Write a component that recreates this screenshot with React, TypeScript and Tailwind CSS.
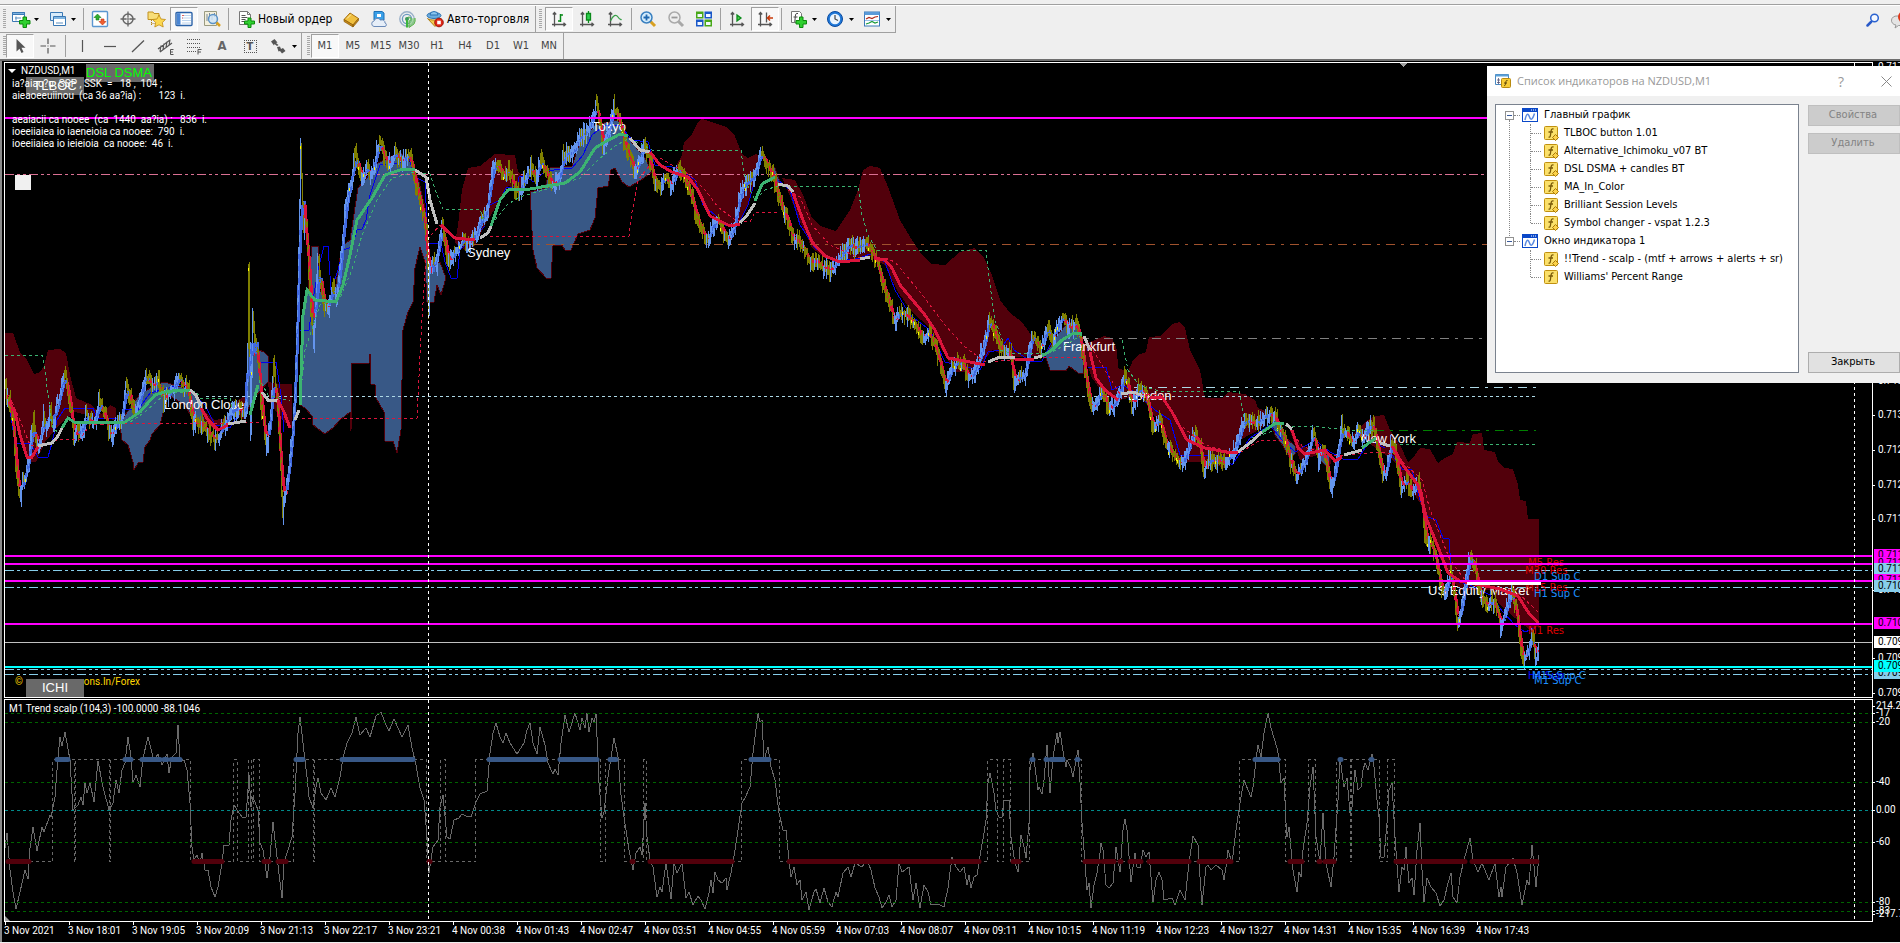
import type { ReactNode } from "react";
import clsx from "clsx";

type Point = [number, number];

const parse = (s: string): Point[] => s.trim().split(/\s+/).map((p) => p.split(",").map(Number) as Point);
const toPath = (pts: Point[]) => pts.map(([x, y], i) => `${i ? "L" : "M"}${x} ${y}`).join("");

/* ---------- chart data ---------- */

const PRICE = parse(`5,388 7,398 10,405 13,430 15,465 18,490 20,498 22,475 25,480 28,462 30,435 33,422 36,450 40,440 43,415 46,430
50,410 53,425 56,405 60,395 63,378 65,375 68,398 71,410 73,440 77,428 81,435 85,415 90,420 95,425 98,400 104,415 108,430 112,438
116,420 121,420 126,380 130,400 135,410 140,400 144,380 148,377 152,388 158,382 163,400 170,392 174,390 178,374 182,385 188,390
192,425 196,420 200,425 206,430 214,440 220,432 226,420 234,408 240,410 246,412 248,270 250,430 252,315 255,345 258,365 260,400
263,425 266,450 270,415 273,365 276,400 280,460 282,515 284,495 288,470 291,440 294,400 297,300 300,150 303,230 306,225 310,310
313,345 317,255 322,300 328,312 332,285 336,300 340,260 345,205 350,185 355,152 360,180 366,168 372,175 376,150 380,142 385,160
390,165 394,152 398,160 404,160 409,154 414,180 420,205 426,230 428,310 429,275 432,265 436,265 439,235 442,224 445,250 448,263
452,255 458,245 464,240 470,242 475,235 480,218 486,215 490,180 494,162 498,165 503,180 508,170 514,188 518,193 524,180 530,167
536,180 541,157 546,175 553,185 558,180 564,152 570,155 576,145 582,135 588,127 594,117 596,100 600,130 602,152 606,140 610,120
613,107 617,115 621,130 625,145 630,158 634,173 638,165 644,145 650,165 655,187 660,185 665,177 670,190 675,172 682,172 686,185
691,195 695,215 700,225 705,238 708,240 712,225 718,220 724,235 728,243 733,230 738,200 743,185 748,182 754,175 760,154 766,165
772,175 778,195 783,210 789,225 794,238 800,240 806,255 812,263 818,260 824,268 830,273 836,262 842,255 848,245 854,248 860,245
866,242 870,250 876,260 882,285 888,300 894,323 898,315 904,313 910,320 916,330 922,338 930,335 936,350 942,373 945,390 950,370
956,362 962,365 968,378 975,370 980,355 984,342 988,322 992,325 998,345 1004,350 1010,355 1014,385 1018,375 1024,378 1030,342
1034,337 1040,350 1047,327 1052,340 1058,325 1062,317 1068,330 1076,322 1080,340 1085,378 1090,407 1095,408 1101,390 1106,405
1112,408 1118,395 1125,372 1131,408 1138,390 1145,395 1152,428 1160,420 1166,448 1172,450 1178,463 1185,458 1192,432 1200,445
1203,472 1208,460 1216,460 1224,463 1232,455 1238,440 1242,425 1246,420 1252,425 1260,420 1266,415 1271,413 1278,425 1284,440
1290,462 1296,476 1302,468 1308,450 1313,427 1318,468 1322,445 1328,475 1331,487 1336,460 1341,427 1348,435 1352,448 1358,430
1362,440 1368,426 1373,426 1378,450 1382,478 1386,470 1391,442 1396,460 1400,488 1406,480 1412,493 1418,480 1421,500 1424,540
1430,542 1436,560 1440,588 1444,598 1450,572 1453,590 1457,627 1462,600 1467,568 1470,555 1475,570 1480,598 1487,605 1495,600
1500,632 1505,610 1511,592 1516,610 1520,652 1523,664 1528,650 1532,632 1535,665 1538,645`);

const RED = "#dc143c";
const GREEN = "#3cb371";
const SILVER = "#c0c0c0";

const SLOW_MA: [string, string][] = [
  [RED, "9,402 15,412 20,435 27,457 32,457 38,447"],
  [SILVER, "38,446 52,443 58,436 62,428"],
  [GREEN, "62,428 68,418 74,422 125,422 140,412 155,395 165,392 180,390 190,390"],
  [SILVER, "190,390 196,395 201,406"],
  [RED, "201,408 208,420 218,430 228,425"],
  [SILVER, "228,424 246,421"],
  [GREEN, "250,415 258,385"],
  [SILVER, "262,392 268,400 278,400"],
  [RED, "278,400 284,412 290,428"],
  [SILVER, "295,420 299,410"],
  [GREEN, "300,405 303,315 307,290 315,300 336,302 343,285 350,255 357,220 372,198 385,175 400,170 415,169"],
  [SILVER, "415,170 426,177 430,200 437,224"],
  [RED, "441,225 447,231 455,238 475,240"],
  [SILVER, "480,238 488,233 491,226"],
  [GREEN, "491,226 500,200 508,190 530,189 565,183 580,172 595,148 605,142 620,134 628,136"],
  [SILVER, "630,138 640,150 650,152"],
  [RED, "650,152 660,165 672,172 688,177 698,190 710,216 730,226 740,224"],
  [SILVER, "740,223 748,214 755,203"],
  [GREEN, "755,201 762,184 775,177"],
  [SILVER, "778,184 788,186 793,192"],
  [RED, "793,193 803,220 812,242 825,256 840,262 860,260"],
  [SILVER, "860,259 870,257"],
  [RED, "874,258 885,260 892,268 900,285 925,315 935,330 948,358 970,362 985,365"],
  [SILVER, "988,362 1000,357 1015,357"],
  [RED, "1015,359 1034,359"],
  [SILVER, "1034,358 1042,356"],
  [GREEN, "1042,356 1052,350 1062,340 1072,334 1082,333"],
  [SILVER, "1084,336 1090,350"],
  [RED, "1090,352 1096,378 1105,390 1118,400"],
  [SILVER, "1121,394 1134,392 1142,396"],
  [RED, "1150,398 1162,397 1172,412 1187,440 1205,448 1232,453 1238,452"],
  [SILVER, "1238,452 1250,443 1262,432"],
  [GREEN, "1262,432 1276,423 1284,424"],
  [SILVER, "1286,424 1292,429"],
  [RED, "1292,430 1298,448 1305,454 1325,450 1335,461 1342,457"],
  [SILVER, "1344,455 1362,450"],
  [GREEN, "1362,448 1376,438"],
  [SILVER, "1380,443 1390,446"],
  [RED, "1392,446 1403,465 1418,485 1427,520 1440,552 1448,573 1460,581 1500,589 1518,596 1528,612 1538,623"],
];

const MAROON_CLOUDS = [
  "5,333 13,333 20,352 27,360 34,374 40,372 44,366 48,350 60,349 66,353 70,375 76,398 90,404 102,414 110,405 116,408 116,420 98,418 75,412 60,424 45,442 36,462 30,462 20,430 15,410 5,398",
  "200,408 215,420 226,418 236,402 248,393 246,420 232,414 224,424 215,429 206,425",
  "268,382 280,384 292,384 292,428 280,418 270,402",
  "455,243 458,225 462,190 468,168 480,166 495,154 515,155 518,172 524,176 522,190 508,186 495,208 485,225 475,246 465,250",
  "675,168 682,155 684,142 692,134 698,122 702,119 718,124 726,127 734,134 742,154 748,158 756,154 762,158 756,176 750,200 740,222 730,226 716,220 705,205 695,188 684,178",
  "782,178 795,180 803,195 812,218 820,226 836,231 850,210 858,190 863,170 870,166 880,168 888,187 900,220 912,240 922,255 932,264 945,265 960,252 975,248 984,258 992,275 1000,300 1010,313 1022,322 1032,336 1040,344 1042,356 1010,357 992,350 975,372 955,372 945,355 930,328 912,312 898,292 885,265 870,257 840,262 825,258 812,248 800,222 790,196",
  "1080,345 1095,340 1104,336 1112,338 1117,350 1118,368 1128,372 1133,360 1140,354 1146,352 1149,337 1160,336 1172,324 1180,322 1185,328 1190,350 1200,370 1205,398 1222,398 1228,392 1245,394 1255,400 1258,408 1268,412 1262,428 1240,440 1225,468 1205,462 1182,462 1172,445 1160,424 1140,395 1120,400 1105,396 1092,378",
  "1290,430 1302,446 1322,450 1332,458 1330,466 1318,455 1300,460",
  "1352,435 1365,422 1375,416 1384,415 1390,430 1400,445 1408,462 1415,455 1420,448 1430,449 1435,458 1438,463 1445,458 1453,454 1457,442 1470,443 1473,434 1482,433 1484,450 1495,452 1498,461 1504,468 1513,469 1518,485 1520,500 1526,501 1528,519 1539,519 1539,626 1530,630 1515,618 1500,605 1490,590 1460,590 1445,570 1435,545 1420,503 1405,480 1395,462 1365,440",
];

const BLUE_CLOUDS = [
  "120,425 122,440 128,445 133,462 134,470 138,463 143,462 145,447 150,440 152,434 160,425 165,405 168,395 185,405 192,418 200,430 206,425 200,402 190,390 165,382 157,384 140,394 125,415",
  "247,345 264,352 268,356 268,382 256,396 247,410",
  "300,405 305,408 312,416 313,425 325,434 333,428 340,420 350,412 351,431 352,363 369,363 370,354 371,384 375,385 376,398 384,412 385,441 393,441 397,453 401,430 403,330 408,312 413,302 415,268 420,247 425,262 427,302 434,302 437,285 441,295 446,278 440,262 430,266 426,212 418,178 410,162 400,152 378,163 365,180 358,188 350,240 342,246 335,290 328,304 320,290 318,246 312,246 308,290 303,310",
  "530,192 545,188 550,168 572,166 580,142 595,125 618,120 630,140 645,158 652,172 641,180 629,187 622,182 615,168 611,170 608,186 598,188 595,218 590,230 578,234 571,250 565,250 562,245 553,246 551,278 546,278 537,268 533,250 531,210",
  "771,166 775,168 780,182 776,186",
  "1045,355 1050,370 1066,371 1069,366 1078,373 1084,373 1081,334 1078,322 1068,322 1055,338",
  "1270,417 1278,418 1284,436 1295,446 1295,454 1290,459 1283,446 1275,435",
  "1318,450 1330,456 1328,468 1320,460",
];

const GREEN_DASHED = [
  "5,355 42,355 45,370 48,395 53,430 60,432",
  "130,422 145,412 165,394 196,391 200,398 230,398 232,410",
  "254,400 260,380 268,395 290,401",
  "300,400 305,350 320,305 340,298 352,270 362,235 378,198 392,178 415,172 430,174 437,195 443,209 480,209 484,222",
  "495,220 508,204 520,197 560,185 580,178 598,160 615,146 630,138 652,150 741,150 745,180 755,200 765,190 778,186",
  "782,186 858,186 862,215 868,235 877,250 986,250 990,285 995,320 1003,342",
  "1000,350 1010,353 1040,354 1052,352 1065,345 1082,335",
  "1122,340 1128,370 1140,386 1160,391 1239,391 1244,420",
  "1252,438 1285,427 1312,426 1345,430 1376,430",
];

const RED_DASHED = [
  "12,402 22,425 30,445 38,447 60,439 80,439 90,425 125,423 240,423 262,422",
  "302,418 417,418 421,335 427,240 440,225",
  "490,236 629,236 632,212 638,180 650,165",
  "660,158 690,175 705,190 718,207 735,220 750,222 755,212 780,212",
  "788,190 800,197 812,225 830,245 860,258",
  "885,258 895,262 920,292 945,325 965,347 985,362 1050,357 1082,357",
  "1090,345 1108,375 1120,394 1160,394 1180,425 1205,445 1238,454 1260,440 1284,440",
  "1290,430 1303,447 1335,456 1380,452 1400,455",
  "1403,462 1422,480 1430,510 1450,560 1465,580 1490,588 1515,590 1538,612",
];

const BLUE_THIN = [
  "10,410 15,443 30,443 38,457 48,457 52,443 57,420 65,408 93,408 97,418 118,419 126,409 138,410 150,393 180,385 190,390 205,405 215,425 230,428 240,412",
  "258,362 276,362 281,395 284,432",
  "300,330 309,330 313,300 318,270 324,246 328,246 331,290 338,270 343,250 352,247 357,230 362,229 366,220 370,195 380,165 400,163 408,155 415,177 425,182 428,243 441,243 445,262 451,278 457,278 460,250 485,226",
  "490,205 500,200 506,188 518,186 519,177 524,176 534,182 545,171 572,168 583,155 592,135 605,125 620,125 632,140 648,142 655,165 680,168 695,180 703,205 715,215 725,225 738,225 748,205 755,180",
  "778,180 790,190 800,225 815,248 835,262 860,258 870,254 885,262 895,290 910,315 930,330 945,362 980,370 988,352 1000,350 1008,338 1014,350 1030,361 1042,361 1055,335",
  "1088,367 1106,367 1112,390 1122,385 1135,392 1155,410 1170,420 1180,455 1220,455 1232,465 1250,438 1270,425 1282,440 1295,452 1315,440 1330,452 1343,459 1358,459 1370,440 1385,448",
  "1390,452 1402,469 1412,470 1420,500 1428,517 1436,520 1443,538 1449,539 1452,580 1470,585 1490,595 1503,612 1515,625 1525,632 1535,628",
];

const OSCILLATOR = parse(`5,848 7,833 10,870 13,892 16,909 20,892 25,870 28,879 30,848 33,827 37,851 42,827 44,832 50,815 51,817 55,797 58,757
60,737 62,746 65,732 70,760 73,810 78,805 81,797 83,805 85,783 87,793 90,783 94,802 98,761 103,787 109,810 113,803 116,780 119,793
122,770 125,763 128,737 131,757 133,783 136,775 140,787 143,758 148,737 152,753 154,760 158,754 162,765 167,754 169,773 172,757
176,753 178,725 180,762 184,760 187,770 190,803 192,847 194,860 197,855 200,863 202,853 205,870 208,870 211,887 215,897 218,887
222,863 224,845 229,845 231,820 234,805 239,813 243,818 246,817 249,775 251,807 253,797 258,810 260,843 263,850 267,878 270,857
273,822 277,857 282,898 284,863 288,850 292,837 295,793 298,733 300,717 303,743 307,777 309,797 313,808 316,787 318,778 321,793
326,800 331,788 335,797 340,777 343,758 347,743 352,733 356,717 360,735 366,728 370,737 376,716 381,712 386,725 389,731 394,719
398,728 402,737 408,725 412,748 416,765 420,788 424,800 427,837 429,873 433,847 438,840 440,807 443,795 447,837 450,839 454,820
459,818 462,814 466,816 471,817 476,802 480,794 487,791 490,753 493,733 496,723 500,737 503,743 506,733 510,743 517,754 524,743
527,730 530,723 533,743 537,754 540,727 545,745 548,763 553,774 555,769 558,775 561,743 565,715 569,732 575,713 580,730 582,718
585,728 587,713 589,732 592,718 594,722 596,714 597,737 599,783 602,818 604,812 608,777 611,757 614,738 618,757 621,795 624,817
629,850 633,870 636,853 640,847 642,855 645,803 647,837 650,860 653,867 657,897 660,887 662,892 666,863 671,899 674,863 677,873
682,863 686,898 689,892 693,905 698,896 701,900 705,909 709,893 711,880 713,893 715,872 718,880 722,883 726,878 727,890 731,873
735,850 738,830 742,803 745,798 750,787 753,753 758,713 760,722 762,720 764,760 768,747 771,767 775,780 779,813 783,830 786,830
789,860 791,877 794,867 797,885 800,880 802,900 806,892 809,910 814,892 816,889 820,903 824,888 828,902 832,907 836,892 838,897
843,873 848,867 851,877 855,863 862,867 867,860 871,870 875,888 879,897 882,908 886,902 889,895 892,907 896,900 899,863 902,872
909,867 913,900 916,883 920,908 924,885 928,892 931,905 938,904 944,907 948,888 952,857 956,867 960,872 964,867 967,885 969,875
971,888 974,877 977,875 981,850 984,833 986,820 988,783 990,773 994,793 996,810 999,817 1002,817 1004,800 1009,800 1011,837
1015,863 1018,872 1021,835 1024,847 1026,858 1029,823 1030,770 1033,753 1035,767 1038,790 1039,787 1042,794 1044,780 1047,745
1050,793 1053,757 1057,733 1058,743 1060,732 1064,757 1066,767 1067,760 1071,768 1073,777 1076,760 1078,750 1080,783 1082,823
1085,863 1087,890 1089,883 1091,908 1094,885 1097,873 1100,853 1101,843 1103,850 1106,885 1109,888 1113,883 1116,847 1120,872
1123,830 1125,819 1127,830 1131,882 1135,853 1137,867 1140,868 1143,850 1146,857 1149,852 1153,902 1156,880 1159,872 1162,880
1164,900 1172,898 1175,905 1180,890 1185,900 1189,863 1193,836 1198,845 1200,877 1202,905 1206,867 1208,865 1211,870 1216,865
1222,870 1224,880 1226,867 1228,850 1232,863 1236,830 1240,803 1244,780 1248,790 1251,797 1253,787 1256,760 1258,745 1261,757
1264,733 1268,713 1271,728 1277,748 1278,753 1281,783 1284,778 1286,823 1287,837 1289,827 1293,870 1297,892 1299,872 1301,877
1303,850 1307,823 1310,787 1313,767 1316,837 1320,862 1323,813 1326,863 1331,887 1334,857 1338,800 1340,758 1344,787 1347,778
1350,813 1352,807 1355,770 1358,790 1361,787 1363,770 1365,763 1368,770 1372,754 1374,767 1377,800 1379,817 1381,857 1384,857
1387,823 1389,790 1392,783 1395,837 1399,892 1402,867 1404,870 1406,847 1409,883 1412,878 1414,895 1417,850 1420,823 1422,870
1424,902 1427,878 1431,887 1436,893 1440,906 1444,900 1448,883 1451,873 1453,897 1457,903 1460,877 1464,860 1470,838 1473,860
1478,872 1482,863 1489,880 1495,863 1499,897 1501,887 1502,897 1506,867 1513,858 1517,873 1522,905 1527,880 1529,885 1532,845
1536,887 1539,855`);

const UPPER = 759;
const LOWER = 861;
const UPPER_BARS = "57,68 125,131 142,160 164,167 171,180 296,303 342,413 489,545 560,597 610,616 751,769 1032,1033 1046,1047 1051,1063 1077,1078 1255,1278 1340,1341 1371,1372";
const LOWER_BARS = "8,29 194,222 264,269 278,286 429,430 632,633 650,732 789,951 954,979 1013,1019 1085,1099 1103,1114 1120,1121 1130,1141 1149,1189 1199,1231 1290,1302 1319,1320 1325,1334 1396,1416 1420,1465 1472,1537";
/* x positions where the trend state flips between the lower and upper band */
const FLIPS = [52, 74, 75, 109, 110, 190, 233, 237, 248, 251, 253, 259, 293, 313, 314, 426, 440, 445, 475, 600, 605, 624, 643, 646, 741, 779, 987, 997, 1003, 1010, 1029, 1081, 1239, 1285, 1308, 1315, 1336, 1350, 1351, 1379, 1387, 1394];

const TIMES = ["3 Nov 2021", "3 Nov 18:01", "3 Nov 19:05", "3 Nov 20:09", "3 Nov 21:13", "3 Nov 22:17", "3 Nov 23:21", "4 Nov 00:38", "4 Nov 01:43", "4 Nov 02:47", "4 Nov 03:51", "4 Nov 04:55", "4 Nov 05:59", "4 Nov 07:03", "4 Nov 08:07", "4 Nov 09:11", "4 Nov 10:15", "4 Nov 11:19", "4 Nov 12:23", "4 Nov 13:27", "4 Nov 14:31", "4 Nov 15:35", "4 Nov 16:39", "4 Nov 17:43"];

function random(seed: number) {
  let s = seed;
  return () => {
    s = (s * 1664525 + 1013904223) % 4294967296;
    return s / 4294967296;
  };
}

function buildCandles() {
  const rnd = random(7);
  const close: number[] = [];
  const start = PRICE[0][0];
  const end = PRICE[PRICE.length - 1][0];
  let k = 0;
  for (let x = start; x <= end; x++) {
    while (k < PRICE.length - 2 && PRICE[k + 1][0] < x) k++;
    const [x0, y0] = PRICE[k];
    const [x1, y1] = PRICE[k + 1];
    close.push(y0 + ((y1 - y0) * (x - x0)) / (x1 - x0) + (rnd() - 0.5) * 9);
  }
  let up = "";
  let down = "";
  let dots = "";
  close.forEach((c, i) => {
    const prev = close[Math.max(0, i - 1)];
    const ahead = close[Math.min(close.length - 1, i + 2)];
    const x = start + i + 0.5;
    const hi = Math.round(Math.min(c, prev) - 1 - rnd() * 8);
    const lo = Math.round(Math.max(c, prev) + 1 + rnd() * 8);
    const seg = `M${x} ${hi}V${lo}`;
    if (ahead + (rnd() - 0.5) * 6 < prev) up += seg;
    else down += seg;
    if (rnd() > 0.96) dots += `M${x} ${Math.round(c)}v3`;
  });
  const avg = close.map((_, i) => {
    const w = close.slice(Math.max(0, i - 5), i + 2);
    return w.reduce((a, b) => a + b, 0) / w.length;
  });
  let rise = "";
  let fall = "";
  for (let i = 3; i < avg.length; i++) {
    const seg = `M${start + i - 1} ${avg[i - 1].toFixed(1)}L${start + i} ${avg[i].toFixed(1)}`;
    if (avg[i] < avg[i - 3]) rise += seg;
    else fall += seg;
  }
  return { up, down, dots, rise, fall };
}

const candles = buildCandles();

function trendPath() {
  let y = LOWER;
  let d = `M5 ${y}`;
  for (const x of FLIPS) {
    d += `H${x}`;
    y = y === LOWER ? UPPER : LOWER;
    d += `V${y}`;
  }
  return d + "H1539";
}

/* ---------- toolbar ---------- */

const AXES = <path d="M4.500 2.500v14M2 14.500h13.500M2.800 4.500l1.700-2 1.700 2M13.500 12.800l2 1.700-2 1.700" />;

const ICONS: Record<string, ReactNode> = {
  newChart: (
    <>
      <path d="M1.500 2.500h12v9h-12z" fill="#fff" stroke="#3a78b4" />
      <path d="M1.500 2.500h12v2h-12z" fill="#7fb4e0" stroke="#3a78b4" />
      <path d="M4 8h6M5 6.500v4" stroke="#5a8fc0" />
      <path d="M12 7h3.500v3.500H19V14h-3.500v3.500H12V14H8.500v-3.500H12z" fill="#2fd02f" stroke="#0c8a0c" />
    </>
  ),
  profiles: (
    <>
      <path d="M2.500 2.500h12v8h-12z" fill="#d8ebfa" stroke="#3a78b4" />
      <path d="M5.500 6.500h12v9h-12z" fill="#fff" stroke="#3a78b4" />
      <path d="M6 8h11" stroke="#7fb4e0" strokeWidth="2" />
      <path d="M8 13h7" stroke="#5a8fc0" />
    </>
  ),
  marketWatch: (
    <>
      <rect x="1.500" y="1.500" width="15" height="15" rx="1" fill="#fff" stroke="#5a96d0" strokeWidth="1.400" />
      <path d="M6.500 4l3.500 3.500H8V10H5V7.500H3z" fill="#2fae2f" stroke="#167a16" strokeWidth=".6" />
      <path d="M11.500 15L8 11.500h2V9h3v2.500h2z" fill="#f06030" stroke="#c03010" strokeWidth=".6" />
    </>
  ),
  target: (
    <g fill="none" stroke="#666">
      <circle cx="9" cy="9" r="5" strokeWidth="1.500" />
      <circle cx="9" cy="9" r="1.200" />
      <path d="M9 1.500V7M9 11v5.500M1.500 9H7M11 9h5.500" strokeWidth="1.300" />
    </g>
  ),
  folderStar: (
    <>
      <path d="M1 2h5l1 1.500h5v6H1z" fill="#f8de78" stroke="#c09020" />
      <path d="M4.500 10v6M4.500 13.500h4" stroke="#b08010" strokeDasharray="1 1" />
      <path d="M12 5l2 4 4.500.500-3.200 3 .9 4.500-4.200-2.200L7.800 17l.9-4.500-3.200-3L10 9z" fill="#fcd850" stroke="#c08a10" strokeWidth=".8" />
    </>
  ),
  navigator: (
    <>
      <rect x="1" y="2.500" width="16" height="13" rx="1" fill="#fff" stroke="#2a62a8" strokeWidth="1.400" />
      <path d="M2 3.200h3.500v11.600H2z" fill="#4a86d4" />
      <path d="M7 5.500h9M7 8h9M7 10.500h9M7 13h9" stroke="#bcd4ee" />
      <path d="M7 5.500h2M7 8h1" stroke="#e06060" />
    </>
  ),
  tester: (
    <>
      <path d="M1.500 1.500h12v14h-12z" fill="#f4f0dc" stroke="#9a9a80" />
      <path d="M4 4v7M6.500 3v6M9 5v5M11.500 3v4" stroke="#7a8a9a" />
      <circle cx="10" cy="9" r="4.500" fill="#cfe6fa" fillOpacity=".8" stroke="#5a92c8" strokeWidth="1.400" />
      <path d="M13.500 12.500L17 16" stroke="#d8a020" strokeWidth="2.500" />
    </>
  ),
  newOrder: (
    <>
      <path d="M2.500 1.500h8l3 3v10h-11z" fill="#fff" stroke="#777" />
      <path d="M10.500 1.500v3h3" fill="none" stroke="#777" />
      <path d="M4.500 5.500h4M4.500 7.500h6M4.500 9.500h4M4.500 11.500h3" stroke="#555" />
      <path d="M11 8h3v3h3.500v3H14v3.500h-3V14H7.500v-3H11z" fill="#2fd02f" stroke="#0c8a0c" />
    </>
  ),
  book: (
    <>
      <path d="M2 9.500L8 3l8.500 5.500L11 15z" fill="#f0c040" stroke="#a87010" />
      <path d="M2 9.500v2L11 17v-2zM11 15l5.500-6.500v2L11 17z" fill="#c88a18" stroke="#8a5c08" strokeWidth=".7" />
      <path d="M5 8.500L9 4.500" stroke="#fff0b0" />
    </>
  ),
  cloudBox: (
    <>
      <path d="M4 1.500h8l2 1.500v7H4z" fill="#3aa0e8" stroke="#1a70b8" />
      <path d="M7 4h4v3H7z" fill="#fff" />
      <path d="M4 16.500a2.800 2.800 0 010-5.500 3.500 3.500 0 016.500-.8A3 3 0 0115 13a1.800 1.800 0 010 3.500z" fill="#e6eef8" stroke="#6a8ab8" />
    </>
  ),
  signal: (
    <g fill="none">
      <circle cx="9" cy="9" r="7.200" stroke="#9ab0c8" strokeWidth="1.400" />
      <circle cx="9" cy="9" r="4.600" stroke="#6a9ac0" strokeWidth="1.300" />
      <path d="M9 9a2 2 0 112 2v6.500l5-3.500A8 8 0 0017 8" fill="#7ccf6a" fillOpacity=".6" stroke="#5ab04a" />
      <circle cx="9" cy="9" r="2" fill="#3a9a5a" />
      <path d="M9 10v7.500" stroke="#3cb43c" strokeWidth="2" />
    </g>
  ),
  autoTrade: (
    <>
      <ellipse cx="8" cy="5.500" rx="7" ry="3" fill="#6aaee0" stroke="#2a70b0" />
      <path d="M4 5a4 3.500 0 018 0z" fill="#8ac6f0" stroke="#2a70b0" />
      <path d="M1.500 8.500C4 10.500 12 10.500 15 8.500L9 16.500z" fill="#f4cc50" stroke="#b08018" />
      <circle cx="13" cy="12.500" r="4.300" fill="#e02818" stroke="#a01408" />
      <path d="M11.200 10.700h3.600v3.600h-3.600z" fill="#fff" />
    </>
  ),
  bars: (
    <g fill="none" stroke="#555" strokeWidth="1.300">
      {AXES}
      <path d="M10.500 4v8M10.500 5h2.500M8 11h2.500" stroke="#0a8a1a" strokeWidth="1.500" />
    </g>
  ),
  candlesIcon: (
    <g fill="none" stroke="#555" strokeWidth="1.300">
      {AXES}
      <path d="M10.500 1v12" stroke="#0a8a1a" />
      <path d="M8.500 3.500h4v6.500h-4z" fill="#2fd04f" stroke="#0a8a1a" />
    </g>
  ),
  lineIcon: (
    <g fill="none" stroke="#555" strokeWidth="1.300">
      {AXES}
      <path d="M4.500 11C7 5 10 4 12 7s2.500 2 3.500 3" stroke="#3aa04a" />
    </g>
  ),
  zoomIn: (
    <>
      <path d="M11.500 11.500L16 16" stroke="#d8a020" strokeWidth="3" />
      <circle cx="7.500" cy="7.500" r="5.500" fill="#d4ecfc" stroke="#3a80c0" strokeWidth="1.500" />
      <path d="M4.500 7.500h6M7.500 4.500v6" stroke="#2068b0" strokeWidth="1.800" />
    </>
  ),
  zoomOut: (
    <>
      <path d="M11.500 11.500L16 16" stroke="#a8a8a8" strokeWidth="3" />
      <circle cx="7.500" cy="7.500" r="5.500" fill="#eee" stroke="#aaa" strokeWidth="1.500" />
      <path d="M4.500 7.500h6" stroke="#999" strokeWidth="1.800" />
    </>
  ),
  tiles: (
    <>
      <path d="M1 1.500h7.500v7H1zM9.500 9.500H17v7H9.500z" fill="#48a818" />
      <path d="M9.500 1.500H17v7H9.500zM1 9.500h7.500v7H1z" fill="#1a58c8" />
      <path d="M2.500 4h4.500v3H2.500zM11 4h4.500v3H11zM2.500 12H7v3H2.500zM11 12h4.500v3H11z" fill="#f4f8ff" />
    </>
  ),
  scroll: (
    <g fill="none" stroke="#555" strokeWidth="1.300">
      {AXES}
      <path d="M9 5l4 3-4 3z" fill="#4fd04f" stroke="#0a8a1a" />
    </g>
  ),
  shift: (
    <g fill="none" stroke="#555" strokeWidth="1.300">
      {AXES}
      <path d="M10.500 2.500v10" />
      <path d="M17 8h-5M14 5.500L11.500 8 14 10.500" stroke="#c83808" strokeWidth="1.500" />
    </g>
  ),
  indicators: (
    <>
      <path d="M2.500 1.500h8l2 2v9h-10z" fill="#fff" stroke="#777" />
      <path d="M9 3.500c-2-.5-2.500.5-2.700 3L5.800 12M4.500 7h4" fill="none" stroke="#444" />
      <path d="M10.500 7h3.500v3.500h3.500V14H14v3.500h-3.500V14H7v-3.500h3.500z" fill="#2fd02f" stroke="#0c8a0c" />
    </>
  ),
  clock: (
    <>
      <circle cx="9" cy="9" r="7.500" fill="#1f78d8" stroke="#0a4aa0" />
      <circle cx="9" cy="9" r="5.200" fill="#eaf4fe" />
      <path d="M9 5v4l3 1.500" fill="none" stroke="#444" strokeWidth="1.200" />
    </>
  ),
  template: (
    <>
      <rect x="1.500" y="2" width="15" height="14" fill="#fff" stroke="#3a78b8" />
      <path d="M1.500 2h15v3h-15z" fill="#5a9ad8" />
      <path d="M3 9l3-1.500 3 1 3-1.500 3-.5" fill="none" stroke="#b02818" strokeWidth="1.200" />
      <path d="M3 14l3-1 3-1.500 3 1.500 3-1" fill="none" stroke="#1a9a3a" strokeWidth="1.200" />
      <path d="M2 10.500h14" stroke="#9ac0e8" />
    </>
  ),
  pointer: <path d="M5.500 2v12.500l3-2.800 2 4.300 2-1-2-4.200h4z" fill="#555" />,
  cross: <path d="M9 1.500V7M9 11v5.500M1.500 9H7M11 9h5.500M8.500 9h1" stroke="#555" strokeWidth="1.200" />,
  vline: <path d="M9.500 3v12" stroke="#555" strokeWidth="1.200" />,
  hline: <path d="M3 9.500h12" stroke="#555" strokeWidth="1.200" />,
  trend: <path d="M3 15L15 3.500" stroke="#555" strokeWidth="1.300" />,
  equid: (
    <>
      <path d="M1 12L13 3M3 15L15 6M4 8.500l-1 6M7 6.500l-1 6M10 4.500l-1 6M13 2.500l-1 6" stroke="#555" strokeWidth="1.200" />
      <path d="M16.500 12.500h-3v5h3M13.500 15h2.500" fill="none" stroke="#555" />
    </>
  ),
  fibo: (
    <>
      <path d="M2 2.500h14M2 6.500h14M2 10.500h14M2 14.500h9" stroke="#555" strokeDasharray="1 1" />
      <path d="M16.500 12.500h-3.500v5M13 15h3" fill="none" stroke="#555" />
    </>
  ),
  arrows: (
    <path d="M2 4.500L5.500 2l3 3.500-1.500.5 2.500 2-1.500 1-2.500-2-.5 1.500zM8 10l3-.5 1 2.500 2-1 2.500 3-3.500 2.500-2-2.500-1.500.5z" fill="#555" />
  ),
};

const PRESSED = "border border-t-[#a0a0a0] border-l-[#a0a0a0] border-r-white border-b-white bg-[#f8f8f8]";

function Icon({ name }: { name: string }) {
  return (
    <svg viewBox="0 0 18 18" className="size-[18px] shrink-0 overflow-visible" aria-hidden="true">
      {ICONS[name]}
    </svg>
  );
}

const Grip = () => <span className="h-5 w-[3px] shrink-0 bg-[repeating-linear-gradient(#a8a8a8_0_1px,#efefef_1px_2px)]" />;
const Separator = () => <span className="mx-[2px] h-[22px] w-px shrink-0 bg-[#a0a0a0]" />;

function ToolButton({ label, pressed, children }: { label: string; pressed?: boolean; children: ReactNode }) {
  return (
    <button aria-label={label} aria-pressed={pressed} className={clsx("flex h-6 w-7 shrink-0 items-center justify-center", pressed && PRESSED)}>
      {children}
    </button>
  );
}

function Caret({ label }: { label: string }) {
  return (
    <button aria-label={label} className="flex h-6 w-[9px] shrink-0 items-center">
      <svg viewBox="0 0 5 3" className="h-[3px] w-[5px]">
        <path d="M0 0h5L2.500 3z" />
      </svg>
    </button>
  );
}

const PERIODS = ["M1", "M5", "M15", "M30", "H1", "H4", "D1", "W1", "MN"];

function Toolbars() {
  return (
    <header className="bg-[#efefef] text-black">
      <div className="h-[5px] border-b border-[#a0a0a0]" />
      <div className="flex h-7 items-center border-t border-white">
        <div className="flex h-[27px] items-center border-r border-b border-[#a0a0a0] pl-[3px]">
          <Grip />
          <ToolButton label="Новый график"><Icon name="newChart" /></ToolButton>
          <Caret label="Новый график: список" />
          <ToolButton label="Профили"><Icon name="profiles" /></ToolButton>
          <Caret label="Профили: список" />
          <span className="w-px" />
          <Separator />
          <ToolButton label="Обзор рынка"><Icon name="marketWatch" /></ToolButton>
          <ToolButton label="Окно данных"><Icon name="target" /></ToolButton>
          <ToolButton label="Избранное"><Icon name="folderStar" /></ToolButton>
          <ToolButton label="Навигатор" pressed><Icon name="navigator" /></ToolButton>
          <ToolButton label="Тестер"><Icon name="tester" /></ToolButton>
          <Separator />
          <button className="flex h-6 w-[106px] shrink-0 items-center gap-[3px] pl-[6px] text-[12px] leading-4 whitespace-nowrap">
            <Icon name="newOrder" />
            Новый ордер
          </button>
          <ToolButton label="MetaEditor"><Icon name="book" /></ToolButton>
          <ToolButton label="VPS"><Icon name="cloudBox" /></ToolButton>
          <ToolButton label="Сигналы"><Icon name="signal" /></ToolButton>
          <button className="flex h-6 w-[114px] shrink-0 items-center gap-[3px] pl-[5px] text-[12px] leading-4 whitespace-nowrap">
            <Icon name="autoTrade" />
            Авто-торговля
          </button>
        </div>
        <div className="flex h-[27px] items-center border-r border-b border-[#a0a0a0] pl-[3px]">
          <Grip />
          <span className="w-[3px]" />
          <ToolButton label="Бары" pressed><Icon name="bars" /></ToolButton>
          <ToolButton label="Свечи"><Icon name="candlesIcon" /></ToolButton>
          <ToolButton label="Линия"><Icon name="lineIcon" /></ToolButton>
          <Separator />
          <ToolButton label="Увеличить"><Icon name="zoomIn" /></ToolButton>
          <ToolButton label="Уменьшить"><Icon name="zoomOut" /></ToolButton>
          <ToolButton label="Расположить окна"><Icon name="tiles" /></ToolButton>
          <Separator />
          <ToolButton label="Автопрокрутка"><Icon name="scroll" /></ToolButton>
          <ToolButton label="Сдвиг графика" pressed><Icon name="shift" /></ToolButton>
          <Separator />
          <ToolButton label="Индикаторы"><Icon name="indicators" /></ToolButton>
          <Caret label="Индикаторы: список" />
          <ToolButton label="Периоды"><Icon name="clock" /></ToolButton>
          <Caret label="Периоды: список" />
          <ToolButton label="Шаблоны"><Icon name="template" /></ToolButton>
          <Caret label="Шаблоны: список" />
        </div>
        <div className="ml-auto flex shrink-0 items-center gap-[11px] overflow-hidden">
          <button aria-label="Поиск">
            <svg viewBox="0 0 14 14" className="size-[14px]">
              <path d="M1.500 12.500L5 9" stroke="#2a5ac8" strokeWidth="2.500" strokeLinecap="round" />
              <circle cx="8.500" cy="5" r="3.800" fill="#f4f8ff" stroke="#2a62d0" strokeWidth="1.500" />
            </svg>
          </button>
          <button aria-label="Сообщения" className="w-[9px] overflow-hidden">
            <svg viewBox="0 0 18 18" className="size-[18px] max-w-none">
              <path d="M6 5a5 4.500 0 00-1 9l-1 3 3.500-2.500H12V5z" fill="#e4e4e4" stroke="#999" />
              <circle cx="13" cy="6" r="6" fill="#e03818" />
            </svg>
          </button>
        </div>
      </div>
      <div className="flex h-[26px] items-center">
        <div className="flex h-full items-center border-r border-[#a0a0a0] pl-[3px]">
          <Grip />
          <ToolButton label="Курсор" pressed><Icon name="pointer" /></ToolButton>
          <ToolButton label="Перекрестие"><Icon name="cross" /></ToolButton>
          <span className="w-px" />
          <Separator />
          <ToolButton label="Вертикальная линия"><Icon name="vline" /></ToolButton>
          <ToolButton label="Горизонтальная линия"><Icon name="hline" /></ToolButton>
          <ToolButton label="Трендовая линия"><Icon name="trend" /></ToolButton>
          <ToolButton label="Канал"><Icon name="equid" /></ToolButton>
          <ToolButton label="Фибоначчи"><Icon name="fibo" /></ToolButton>
          <button className="h-6 w-7 shrink-0 text-[13px] font-bold text-[#666]">A</button>
          <button className="flex h-6 w-7 shrink-0 items-center justify-center">
            <span className="flex size-[13px] items-center justify-center border border-dotted border-[#555] text-[11px] leading-none font-bold text-[#555]">T</span>
          </button>
          <ToolButton label="Стрелки"><Icon name="arrows" /></ToolButton>
          <Caret label="Стрелки: список" />
        </div>
        <div className="flex h-full items-center border-r border-[#a0a0a0] pl-[5px]">
          <Grip />
          <span className="w-px" />
          {PERIODS.map((p) => (
            <button key={p} className={clsx("flex h-6 w-7 shrink-0 items-center justify-center text-[11px] text-[#444]", p === "M1" && PRESSED)}>
              {p}
            </button>
          ))}
        </div>
      </div>
      <div className="h-[2px] bg-[#6e6e6e]" />
    </header>
  );
}

/* ---------- charts ---------- */

type Level = { y: number; color: string; width?: number; dash?: string; from?: number; to?: number };

const DOT = "3 3";
const DASH_DOT = "9 6 3 6";
const DASH_DOT_DOT = "9 3 3 3 3 3";

const BACK_LEVELS: Level[] = [
  { y: 174.5, color: "#db7093", dash: DASH_DOT_DOT },
  { y: 244.5, color: "#a0522d", dash: DASH_DOT, from: 474 },
  { y: 338.5, color: "#808080", dash: DASH_DOT, from: 1080 },
  { y: 387.5, color: "#add8e6", dash: DASH_DOT, from: 1134, to: 1536 },
  { y: 396.5, color: "#add8e6", dash: DOT, from: 206, to: 1536 },
  { y: 430.5, color: "#008000", dash: DASH_DOT, from: 1375, to: 1536 },
  { y: 444.5, color: "#3cb371", dash: DOT, from: 1394, to: 1536 },
  { y: 570.5, color: "#87ceeb", dash: DASH_DOT_DOT },
  { y: 587.5, color: "#87ceeb", dash: DASH_DOT_DOT },
  { y: 669.5, color: "#87ceeb", dash: DASH_DOT_DOT },
  { y: 674.5, color: "#87ceeb", dash: DASH_DOT_DOT },
  { y: 642.5, color: "#c0c0c0" },
];

const FRONT_LEVELS: Level[] = [
  { y: 118, color: "#ff00ff", width: 2 },
  { y: 556, color: "#ff00ff", width: 2 },
  { y: 564, color: "#ff00ff", width: 2 },
  { y: 581, color: "#ff00ff", width: 2 },
  { y: 624, color: "#ff00ff", width: 2 },
  { y: 667, color: "#00ffff", width: 2 },
];

const Levels = ({ items }: { items: Level[] }) => (
  <>
    {items.map((l) => (
      <line key={l.y} x1={l.from ?? 5} x2={l.to ?? "101%"} y1={l.y} y2={l.y} stroke={l.color} strokeWidth={l.width ?? 1} strokeDasharray={l.dash} />
    ))}
  </>
);

const SESSIONS: [number, number, string][] = [
  [164, 409, "London Close"],
  [467, 257, "Sydney"],
  [592, 131, "Tokyo"],
  [1063, 351, "Frankfurt"],
  [1128, 400, "London"],
  [1361, 443, "New York"],
  [1428, 595, "US Equity Market"],
];

const TAGS: [number, number, string, string][] = [
  [1528, 566, "#dd0000", "M5 Res"],
  [1525, 574, "#dd0000", "M30 Res"],
  [1534, 580, "#1e90ff", "D1 Sup C"],
  [1525, 591, "#dd0000", "M15 Res"],
  [1534, 597, "#1e90ff", "H1 Sup C"],
  [1528, 634, "#dd0000", "M1 Res"],
  [1528, 679, "#0000ff", "H4 Sup"],
  [1532, 679, "#1e90ff", "M15 Sup C"],
  [1534, 684, "#1e90ff", "M1 Sup C"],
];

function PriceChart() {
  return (
    <svg className="block h-[634px] w-full" role="img" aria-label="NZDUSD,M1">
      <g transform="translate(-5 -63)" fill="none" shapeRendering="crispEdges">
        {MAROON_CLOUDS.map((c) => <polygon key={c} points={c} fill="#52000b" />)}
        {BLUE_CLOUDS.map((c) => <polygon key={c} points={c} fill="#385886" stroke="#52000b" />)}
        <Levels items={BACK_LEVELS} />
        {BLUE_THIN.map((l) => <polyline key={l} points={l} stroke="#0000ee" />)}
        <path d={candles.down} stroke="#808000" />
        <path d={candles.up} stroke="#6495ed" />
        <path d={candles.rise} stroke="#4169e1" strokeWidth="3" />
        <path d={candles.fall} stroke={RED} strokeWidth="3" />
        <g fill="#fff" fontSize="13" fontFamily="Liberation Sans, sans-serif">
          {SESSIONS.map(([x, y, t]) => <text key={t} x={x} y={y}>{t}</text>)}
        </g>
        <path d={candles.up} stroke="#6495ed" strokeDasharray="7 5" />
        <path d={candles.down} stroke="#808000" strokeDasharray="6 7" />
        <path d={candles.dots} stroke="#ffff00" />
        {GREEN_DASHED.map((l) => <polyline key={l} points={l} stroke={GREEN} strokeDasharray={DOT} />)}
        {RED_DASHED.map((l) => <polyline key={l} points={l} stroke={RED} strokeDasharray={DOT} />)}
        {SLOW_MA.map(([color, l]) => <polyline key={l} points={l} stroke={color} strokeWidth="3" />)}
        <g fontSize="10" fontFamily="DejaVu Sans, sans-serif">
          {TAGS.map(([x, y, color, t]) => <text key={t} x={x} y={y} fill={color}>{t}</text>)}
        </g>
        <Levels items={FRONT_LEVELS} />
        <path d="M1467 583h74" stroke="#fff" strokeWidth="3" />
        <path d="M428.500 63V697M1854.500 63V697" stroke="#fff" strokeDasharray={DOT} />
        <path d="M1399 63h9l-4.500 4z" fill="#a0a0a0" />
      </g>
    </svg>
  );
}

const OSC_LEVELS: Level[] = [
  { y: 713.5, color: "#006400", dash: DOT },
  { y: 722.5, color: "#006400", dash: DOT },
  { y: 782.5, color: "#006400", dash: DOT },
  { y: 810.5, color: "#008b8b", dash: DOT },
  { y: 842.5, color: "#006400", dash: DOT },
  { y: 902.5, color: "#006400", dash: DOT },
  { y: 911.5, color: "#006400", dash: DOT },
];

function Oscillator() {
  return (
    <svg className="block h-[221px] w-full" role="img" aria-label="Trend scalp">
      <g transform="translate(-5 -700)" fill="none">
        <g shapeRendering="crispEdges">
          <path d={toPath(OSCILLATOR)} stroke="#696969" />
          <Levels items={OSC_LEVELS} />
          <path d={trendPath()} transform="translate(.5 .5)" stroke="#696969" strokeDasharray={DOT} />
        </g>
        <g strokeWidth="5" strokeLinecap="round">
          {parse(UPPER_BARS).map(([a, b]) => <path key={a} d={`M${a} ${UPPER + 0.5}H${b}`} stroke="#385886" />)}
          {parse(LOWER_BARS).map(([a, b]) => <path key={a} d={`M${a} ${LOWER + 0.5}H${b}`} stroke="#52000b" />)}
        </g>
        <path d="M428.500 700V921M1854.500 700V921" stroke="#fff" strokeDasharray={DOT} shapeRendering="crispEdges" />
        <path d="M5 921v-5l5 5z" fill="#a0a0a0" />
      </g>
    </svg>
  );
}

type AxisLabel = { y: number; text: string; badge?: string };

const PRICE_LABELS: AxisLabel[] = [
  { y: 67, text: "0.71755" },
  { y: 381, text: "0.71350" },
  { y: 415, text: "0.71310" },
  { y: 450, text: "0.71265" },
  { y: 485, text: "0.71225" },
  { y: 519, text: "0.71180" },
  { y: 590, text: "0.71090" },
  { y: 658, text: "0.70950" },
  { y: 693, text: "0.70910" },
  { y: 555, text: "0.71135", badge: "bg-[#ff00ff] text-black" },
  { y: 563, text: "0.71125", badge: "bg-[#ff00ff] text-black" },
  { y: 569, text: "0.71115", badge: "bg-[#87ceeb] text-black" },
  { y: 580, text: "0.71100", badge: "bg-[#ff00ff] text-black" },
  { y: 586, text: "0.71095", badge: "bg-[#87ceeb] text-black" },
  { y: 623, text: "0.71050", badge: "bg-[#ff00ff] text-black" },
  { y: 642, text: "0.70995", badge: "bg-white text-black" },
  { y: 673, text: "0.70955", badge: "bg-[#87ceeb] text-black" },
  { y: 666, text: "0.70965", badge: "bg-[#00ffff] text-black" },
];

const OSC_LABELS: AxisLabel[] = [
  { y: 706, text: "214.27" },
  { y: 713, text: "-17" },
  { y: 722, text: "-20" },
  { y: 782, text: "-40" },
  { y: 810, text: "0.00" },
  { y: 842, text: "-60" },
  { y: 902, text: "-80" },
  { y: 911, text: "-83" },
  { y: 914, text: "-217.7" },
];

/* price levels sit at free positions along the scale */
function Axis({ labels, origin, pad }: { labels: AxisLabel[]; origin: number; pad: string }) {
  return (
    <div className="relative w-[27px] shrink-0 overflow-hidden">
      {labels.map((l) => (
        <div
          key={l.text}
          className={clsx("absolute left-0 flex h-3 items-center", l.badge ? "z-10" : "text-white")}
          style={{ top: l.y - origin - 6 }}
        >
          {!l.badge && <span className="h-px w-[2px] bg-white" />}
          <span className={clsx(l.badge ? "ml-px pr-3 pl-1" : pad, l.badge)}>{l.text}</span>
        </div>
      ))}
    </div>
  );
}

const COMMENTS = [
  "ia?aiao?u  SSP , SSK  =   18 ,  104 ;",
  "aieaoeeuiinou  (ca 36 aa?ia) :       123  i.",
  "",
  "aeaiacii ca nooee  (ca  1440  aa?ia) :   836  i.",
  "ioeeiiaiea io iaeneioia ca nooee:  790  i.",
  "ioeeiiaiea io ieieioia  ca nooee:  46  i.",
];

function Charts() {
  return (
    <main className="flex flex-col border-l-2 border-[#8a8a8a] bg-black pt-[1px] pl-[2px] font-['Roboto',sans-serif] text-[10px] leading-3 text-white">
      <section className="relative flex">
        <div className="min-w-0 flex-1 border border-white">
          <PriceChart />
        </div>
        <Axis labels={PRICE_LABELS} origin={62} pad="ml-[3px]" />
        <div className="absolute top-[3px] left-[4px] flex items-center gap-[5px]">
          <svg viewBox="0 0 8 4" className="h-1 w-2">
            <path d="M0 0h8L4 4z" fill="#fff" />
          </svg>
          NZDUSD,M1
        </div>
        <button className="absolute top-[2px] left-[82px] flex h-[18px] w-[68px] justify-end overflow-hidden bg-[#696969] pr-[2px] font-['Liberation_Sans'] text-[13px] leading-[18px] whitespace-nowrap text-[#00ff00]">DSL DSMA</button>
        <button className="absolute top-[15px] left-[22px] h-[18px] w-[58px] bg-[#696969] font-['Liberation_Sans'] text-[13px] leading-[18px]">TLBOC</button>
        <div className="absolute top-4 left-2">
          {COMMENTS.map((c, i) => (
            <p key={i} className="h-3 whitespace-pre">{c}</p>
          ))}
        </div>
        <button aria-label="Переключить" className="absolute top-[113px] left-[11px] h-[15px] w-[16px] bg-[#f0f0f0]" />
        <a href="#forex" className="absolute bottom-[10px] left-[11px] flex gap-[61px] text-[#ffd700]">
          <span>©</span>
          <span>ons.In/Forex</span>
        </a>
        <button className="absolute bottom-[1px] left-[22px] h-[18px] w-[58px] bg-[#696969] font-['Liberation_Sans'] text-[13px] leading-[18px]">ICHI</button>
      </section>
      <section className="relative mt-px flex">
        <div className="min-w-0 flex-1 border border-white">
          <Oscillator />
        </div>
        <Axis labels={OSC_LABELS} origin={699} pad="ml-px" />
        <p className="absolute top-[4px] left-[5px]">M1 Trend scalp (104,3) -100.0000 -88.1046</p>
      </section>
      <div className="flex h-[20px] overflow-hidden">
        {TIMES.map((t) => (
          <div key={t} className="w-16 shrink-0 whitespace-nowrap">
            <span className="ml-px block h-[3px] w-px bg-white" />
            {t}
          </div>
        ))}
      </div>
    </main>
  );
}

/* ---------- dialog ---------- */

const TREE = [
  {
    title: "Главный график",
    items: ["TLBOC button 1.01", "Alternative_Ichimoku_v07 BT", "DSL DSMA + candles BT", "MA_In_Color", "Brilliant Session Levels", "Symbol changer - vspat 1.2.3"],
  },
  { title: "Окно индикатора 1", items: ["!!Trend - scalp - (mtf + arrows + alerts + sr)", "Williams' Percent Range"] },
];

const WindowIcon = () => (
  <svg viewBox="0 0 16 14" className="h-[14px] w-4 shrink-0">
    <rect x=".5" y=".5" width="15" height="13" fill="#fff" stroke="#0a48c8" />
    <path d="M0 0h16v4H0z" fill="#0a48c8" />
    <path d="M9 2h1M11 2h1M13 2h1" stroke="#fff" />
    <path d="M3 12C4.500 5 6 5 7.500 9s3 2.500 5-3.500" fill="none" stroke="#5a8ae0" strokeWidth="1.500" />
  </svg>
);

const FunctionIcon = ({ custom }: { custom: boolean }) => (
  <svg viewBox="0 0 15 15" className="size-[15px] shrink-0">
    <rect x=".5" y=".5" width="13" height="13" rx="1" fill="#fbe06a" stroke="#c09010" />
    <path d="M9.500 3c-1.800-.4-2.300.5-2.500 2.500l-.6 4c-.2 1.500-.9 1.800-1.900 1.500M4.500 6h4.500" fill="none" stroke="#7a5a08" strokeWidth="1.300" />
    {custom && <path d="M11.500 8.500l3 3-3 3-3-3z" fill="#fcd24a" stroke="#a87808" />}
  </svg>
);

function IndicatorDialog() {
  return (
    <div role="dialog" aria-labelledby="dialog-title" className="absolute top-[66px] -right-2 flex w-[421px] flex-col bg-[#f0f0f0] text-[11px] text-black">
      <div className="flex h-[30px] items-center bg-white pr-[13px] pl-2 text-[#999]">
        <svg viewBox="0 0 16 14" className="h-[14px] w-4">
          <path d="M.5.500h13v10H.5z" fill="#fff" stroke="#4a88c0" />
          <path d="M.5 1.500h13" stroke="#5aa0d8" strokeWidth="2" />
          <path d="M3.500 4v6M2 6h3M2 8.500h3" stroke="#557" strokeWidth=".8" />
          <rect x="6.500" y="4.500" width="9" height="9" rx="1" fill="#f6cc38" stroke="#b88a10" />
          <path d="M12.500 6.500c-1.500-.3-1.500.5-1.700 2l-.4 2c-.2 1-.6 1.200-1.300 1M9 9h3" fill="none" stroke="#5a4208" />
        </svg>
        <h2 id="dialog-title" className="ml-[6px] flex-1 font-['Open_Sans'] text-[11px]">Список индикаторов на NZDUSD,M1</h2>
        <button aria-label="Справка" className="w-[30px] font-['Open_Sans'] text-[14px]">?</button>
        <button aria-label="Закрыть окно" className="ml-[22px] p-[3px]">
          <svg viewBox="0 0 11 11" className="size-[11px]">
            <path d="M.5.500l10 10M10.500.500l-10 10" stroke="#888" />
          </svg>
        </button>
      </div>
      <div className="flex gap-[9px] p-2 pb-[10px]">
        <ul className="h-[269px] w-[304px] shrink-0 border border-[#7a828e] bg-white pt-[1px] pl-[9px]">
          {TREE.map((group, g) => (
            <li key={group.title} className="relative">
              {g === 0 && <span className="absolute top-[14px] -bottom-1 left-[4px] border-l border-dotted border-[#888]" />}
              <div className="flex h-[18px] items-center">
                <button aria-label={`Свернуть: ${group.title}`} className="relative flex size-[9px] items-center justify-center border border-[#919191] bg-white">
                  <span className="h-px w-[5px] bg-[#3a5a9a]" />
                </button>
                <span className="mr-[2px] w-[6px] border-t border-dotted border-[#888]" />
                <WindowIcon />
                <span className="ml-[6px]">{group.title}</span>
              </div>
              <ul>
                {group.items.map((item, i) => (
                  <li key={item} className="flex h-[18px] items-center pl-[25px]">
                    <span className={clsx("self-start border-l border-dotted border-[#888]", i === group.items.length - 1 ? "h-[9px]" : "h-full")} />
                    <span className="mr-[3px] w-[10px] border-t border-dotted border-[#888]" />
                    <FunctionIcon custom={item !== "Williams' Percent Range"} />
                    <span className="ml-[5px] whitespace-nowrap">{item}</span>
                  </li>
                ))}
              </ul>
            </li>
          ))}
        </ul>
        <div className="flex flex-1 flex-col gap-[7px] pt-[1px]">
          <button disabled className="h-[21px] border border-[#bfbfbf] bg-[#ccc] pr-[2px] text-[#838383]">Свойства</button>
          <button disabled className="h-[21px] border border-[#bfbfbf] bg-[#ccc] pr-[2px] text-[#838383]">Удалить</button>
          <button className="mt-auto h-[21px] border border-[#adadad] bg-[#e1e1e1] pr-[2px]">Закрыть</button>
        </div>
      </div>
    </div>
  );
}

export default function App() {
  return (
    <div className="relative min-h-screen overflow-hidden bg-[#efefef] font-['DejaVu_Sans_Condensed','Noto_Sans',sans-serif]">
      <Toolbars />
      <Charts />
      <IndicatorDialog />
    </div>
  );
}
